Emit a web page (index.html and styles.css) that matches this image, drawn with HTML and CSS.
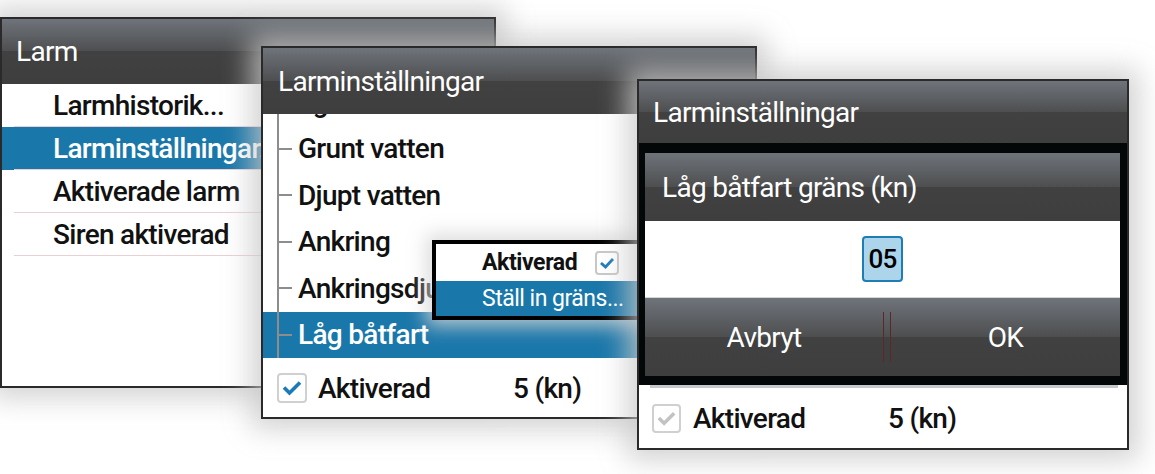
FILE: index.html
```html
<!DOCTYPE html>
<html lang="sv">
<head>
<meta charset="utf-8">
<title>Larminställningar</title>
<link rel="stylesheet" href="styles.css">
</head>
<body>
<div class="stage">
  <section class="win win-larm">
    <header class="win-head win-head--larm">Larm</header>
    <ul class="menu">
      <li class="menu-item">Larmhistorik...</li>
      <li class="menu-item is-selected">Larminställningar...</li>
      <li class="menu-item">Aktiverade larm</li>
      <li class="menu-item">Siren aktiverad</li>
    </ul>
  </section>

  <section class="win win-settings">
    <header class="win-head win-head--settings">Larminställningar</header>
    <div class="tree">
      <div class="tree-item tree-item--partial">Egen larm</div>
      <div class="tree-item">Grunt vatten</div>
      <div class="tree-item">Djupt vatten</div>
      <div class="tree-item">Ankring</div>
      <div class="tree-item">Ankringsdjup</div>
      <div class="tree-item is-selected">Låg båtfart</div>
    </div>
    <div class="status-row">
      <span class="check"><svg viewBox="0 0 26 26" width="26" height="26"><polyline points="5,12.5 10.5,18 21,7.5" fill="none" stroke="#1b7bb8" stroke-width="3.6"/></svg></span>
      <span class="status-label">Aktiverad</span>
      <span class="status-value">5 (kn)</span>
    </div>
  </section>

  <div class="popup">
    <div class="popup-item popup-item--toggle">
      <span>Aktiverad</span>
      <span class="popup-check"><svg viewBox="0 0 20 20" width="20" height="20"><polyline points="4,10 8.5,14 16,6" fill="none" stroke="#1b7bb8" stroke-width="2.8"/></svg></span>
    </div>
    <div class="popup-item popup-item--action">Ställ in gräns...</div>
  </div>

  <section class="win win-dialog">
    <header class="win-head win-head--dialog">Larminställningar</header>
    <div class="modal">
      <div class="dialog">
        <div class="dialog-head">Låg båtfart gräns (kn)</div>
        <div class="dialog-body">
          <span class="spin">05</span>
        </div>
        <div class="dialog-buttons">
          <span class="btn btn-cancel">Avbryt</span>
          <span class="btn-divider"></span>
          <span class="btn btn-ok">OK</span>
        </div>
      </div>
    </div>
    <div class="scroll-edge"></div>
    <div class="status-row status-row--dialog">
      <span class="check check--disabled"><svg viewBox="0 0 26 26" width="25" height="25"><polyline points="5,12.5 10.5,18 21,7.5" fill="none" stroke="#c2c2c2" stroke-width="3.6"/></svg></span>
      <span class="status-label">Aktiverad</span>
      <span class="status-value">5 (kn)</span>
    </div>
  </section>
</div>
</body>
</html>
```

FILE: styles.css
```css
* {
  box-sizing: border-box;
  margin: 0;
  padding: 0;
}

body {
  background: #ffffff;
  font-family: Roboto, "DejaVu Sans Condensed", "Liberation Sans", sans-serif;
  font-weight: 500;
  color: #111111;
  letter-spacing: -0.7px;
  overflow: hidden;
}

.stage {
  position: relative;
  width: 1155px;
  height: 474px;
}

/* windows on the canvas */
.win {
  position: absolute;
  display: flex;
  flex-direction: column;
  background: #ffffff;
  border: 2px solid #2a2a2a;
  box-shadow: 0 0 26px 10px rgba(200, 200, 200, 0.8);
  overflow: hidden;
}

.win-larm {
  left: 0;
  top: 17px;
  width: 496px;
  height: 371px;
  z-index: 1;
}

.win-settings {
  left: 261px;
  top: 46px;
  width: 496px;
  height: 373px;
  z-index: 2;
}

.win-dialog {
  left: 637px;
  top: 79px;
  width: 492px;
  height: 371px;
  z-index: 4;
}

.win-head,
.dialog-head,
.dialog-buttons {
  background: linear-gradient(#6f747b 0%, #4d4e4f 50%, #414141 50%, #3e3e3e 100%);
  color: #ffffff;
}

.win-head {
  flex: none;
  display: flex;
  align-items: center;
  font-size: 28px;
  font-weight: 400;
  white-space: nowrap;
}

.win-head--larm {
  height: 65px;
  padding-left: 14px;
}

.win-head--settings {
  height: 66px;
  padding-left: 15px;
}

.win-head--dialog {
  height: 62px;
  padding-left: 14px;
}

/* left menu */
.menu {
  list-style: none;
}

.menu-item {
  height: 43px;
  display: flex;
  align-items: center;
  padding-left: 51px;
  font-size: 28px;
  white-space: nowrap;
  background: linear-gradient(#ead0d4, #ead0d4) 12px 100% / 100% 1px no-repeat;
}

.menu-item.is-selected {
  background-color: #1a77aa;
  color: #ffffff;
}

/* middle tree list */
.tree {
  flex: none;
  height: 245.5px;
  overflow: hidden;
  display: flex;
  flex-direction: column;
}

.tree-item {
  flex: none;
  height: 46.5px;
  display: flex;
  align-items: center;
  padding-left: 35px;
  font-size: 28px;
  white-space: nowrap;
  background:
    linear-gradient(#8d8d8d, #8d8d8d) 14px 0 / 2px 100% no-repeat,
    linear-gradient(#8d8d8d, #8d8d8d) 14px 50% / 15px 2px no-repeat;
}

.tree-item--partial {
  margin-top: -35px;
}

.tree-item.is-selected {
  background-color: #1a77aa;
  color: #ffffff;
}

.status-row {
  flex: 1;
  display: flex;
  align-items: center;
  padding-left: 14px;
  font-size: 28px;
  white-space: nowrap;
}

.status-row--dialog {
  padding-left: 13px;
}

.check {
  flex: none;
  width: 30px;
  height: 30px;
  border: 2px solid #d0d0d0;
  border-radius: 4px;
  display: flex;
  align-items: center;
  justify-content: center;
  background: #ffffff;
}

.check--disabled {
  width: 29px;
  height: 29px;
}

.status-label {
  width: 195px;
  margin-left: 11px;
}

.status-row--dialog .status-label {
  margin-left: 12px;
}

/* context popup */
.popup {
  position: absolute;
  left: 432px;
  top: 240px;
  width: 215px;
  height: 80px;
  z-index: 3;
  display: flex;
  flex-direction: column;
  background: #ffffff;
  border: 4px solid #000000;
  box-shadow: 0 0 18px 6px rgba(215, 215, 215, 0.85);
}

.popup-item {
  flex: none;
  display: flex;
  align-items: center;
  padding-left: 46px;
  font-size: 23px;
  white-space: nowrap;
}

.popup-item--toggle {
  height: 37px;
  font-weight: bold;
  letter-spacing: -0.4px;
}

.popup-check {
  flex: none;
  width: 24px;
  height: 24px;
  margin-left: 18px;
  border: 2px solid #c8c8c8;
  border-radius: 4px;
  display: flex;
  align-items: center;
  justify-content: center;
}

.popup-item--action {
  height: 35px;
  background: #1a77aa;
  color: #ffffff;
  font-weight: 400;
  letter-spacing: -0.5px;
}

/* modal dialog */
.modal {
  flex: none;
  height: 242px;
  background: #040707;
  padding: 10px 7px 9px 6px;
  display: flex;
}

.dialog {
  flex: 1;
  display: flex;
  flex-direction: column;
}

.dialog-head {
  flex: none;
  height: 68px;
  display: flex;
  align-items: center;
  padding-left: 17px;
  font-size: 28px;
  font-weight: 400;
  white-space: nowrap;
}

.dialog-body {
  flex: none;
  height: 77px;
  background: #ffffff;
  border-bottom: 1px solid #d6d6d6;
  display: flex;
  align-items: center;
  justify-content: center;
}

.spin {
  width: 41px;
  height: 46px;
  background: #acd4ea;
  border: 2px solid #1f7db5;
  border-radius: 4px;
  display: flex;
  align-items: center;
  justify-content: center;
  font-size: 26px;
  color: #000000;
}

.dialog-buttons {
  flex: 1;
  display: flex;
  align-items: center;
}

.btn {
  text-align: center;
  font-size: 28px;
  font-weight: 400;
  color: #ffffff;
}

.btn-cancel {
  width: 238px;
}

.btn-ok {
  flex: 1;
}

.btn-divider {
  flex: none;
  width: 8px;
  height: 50px;
  border-left: 1px solid #5e2727;
  border-right: 1px solid #5e2727;
}

.scroll-edge {
  flex: none;
  height: 3px;
  margin: 0 9px 0 11px;
  background: #c6c9cc;
}
```
